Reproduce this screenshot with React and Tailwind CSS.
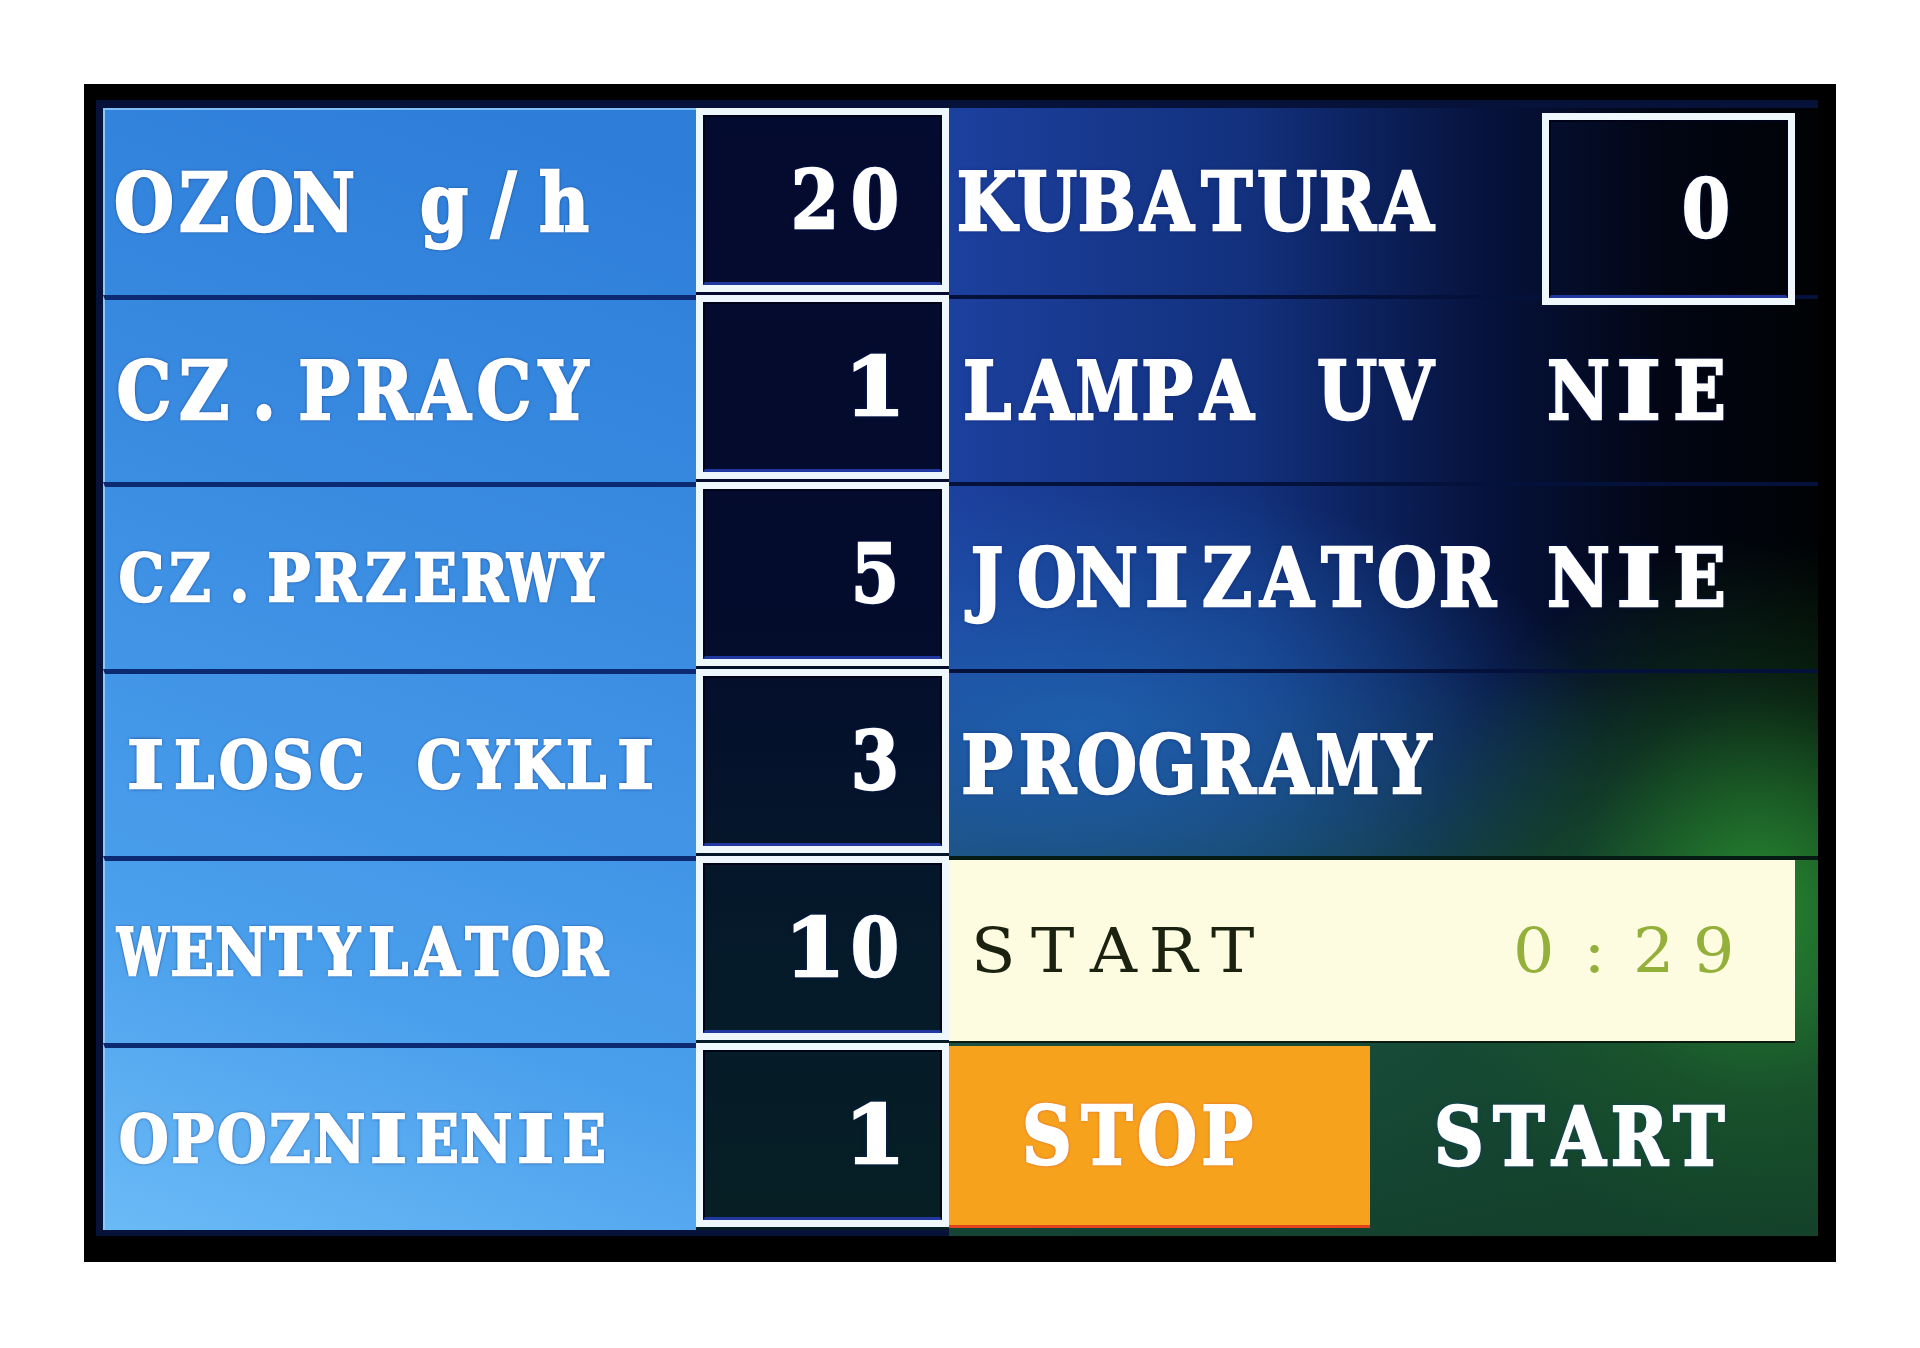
const SERIF = "[font-family:'DejaVu_Serif','Liberation_Serif',serif]";

const haloBlue = "[text-shadow:0_0_2px_#07174f,0_0_4px_#0a2470]";
const haloDark = "[text-shadow:0_0_2px_#2a56c8,0_0_5px_#0b1f6a]";

// horizontal squeeze per glyph so the proportional face reads as a fixed-pitch LCD font
const GLYPH_SCALE = {
  I: "scale-x-[1.2]",
  "1": "scale-x-[1.1]",
  M: "scale-x-[0.72]",
  W: "scale-x-[0.7]",
};

function Lcd({ text, big = true, className = "" }) {
  const cell = big ? "w-[60px]" : "w-[49px]";
  const size = big ? "text-[80px]" : "text-[66px]";
  return (
    <span className={`inline-flex ${SERIF} font-bold leading-none text-white [-webkit-text-stroke:2.5px_#ffffff] ${size} ${className}`}>
      {Array.from(text).map((ch, i) => (
        <span key={i} className={`${cell} shrink-0 flex justify-center`}>
          <span className={`inline-block ${GLYPH_SCALE[ch] || "scale-x-[0.86]"}`}>{ch === " " ? "\u00a0" : ch}</span>
        </span>
      ))}
    </span>
  );
}

// thin status-line lettering
function Thin({ text, className = "" }) {
  return (
    <span className={`inline-flex ${SERIF} font-normal leading-none text-[62px] ${className}`}>
      {Array.from(text).map((ch, i) => (
        <span key={i} className="w-[60px] shrink-0 flex justify-center">
          <span className="inline-block scale-x-[1.05]">{ch}</span>
        </span>
      ))}
    </span>
  );
}

const PARAMS = [
  { label: "OZON g/h", big: true, pad: "pl-[9px]", value: "20" },
  { label: "CZ.PRACY", big: true, pad: "pl-[9px]", value: "1" },
  { label: "CZ.PRZERWY", big: false, pad: "pl-[12px]", value: "5" },
  { label: "ILOSC CYKLI", big: false, pad: "pl-[16px]", value: "3" },
  { label: "WENTYLATOR", big: false, pad: "pl-[14px]", value: "10" },
  { label: "OPOZNIENIE", big: false, pad: "pl-[14px]", value: "1" },
];

function ValueBox({ value, className = "", pad = "pr-[35px]" }) {
  return (
    <div className={`border-[7px] border-[#eef7fb] ${className}`}>
      <div className={`h-full border-2 border-[#010418] border-b-[3px] border-b-[#2138a0] flex items-center justify-end ${pad}`}>
        <Lcd text={value} className={haloDark} />
      </div>
    </div>
  );
}

export default function App() {
  return (
    <div className="w-[1920px] h-[1348px] bg-white pt-[84px] pl-[84px]">
      <div className="w-[1752px] h-[1178px] bg-black pt-4 pl-3">
        <div className="w-[1722px] h-[1136px] bg-[#061239] pt-2 pl-[7px] flex">
          {/* parameter names */}
          <div className="w-[593px] h-[1122px] flex flex-col bg-[linear-gradient(200deg,#2c7cd8_0%,#3a8ce1_40%,#4a9fec_75%,#6abaf6_100%)]">
            {PARAMS.map((p, i) => (
              <div
                key={p.label}
                className={`h-[187px] flex items-center border-l-2 border-l-[#8cc8f8] ${p.pad} ${i > 0 ? "border-t-[5px] border-t-[#0b2a72]" : "border-t-2 border-t-[#7fc0f6]"}`}
              >
                <Lcd text={p.label} big={p.big} className={haloBlue} />
              </div>
            ))}
          </div>

          {/* parameter values */}
          <div className="w-[253px] h-[1122px] flex flex-col bg-[linear-gradient(to_bottom,#040b30_0%,#040c2c_45%,#051a2a_75%,#061f24_100%)]">
            {PARAMS.map((p) => (
              <div key={p.label} className="h-[187px] pb-[3px]">
                <ValueBox value={p.value} className="h-full" />
              </div>
            ))}
          </div>

          {/* right panel */}
          <div className="w-[869px] h-[1128px] flex flex-col [background-image:radial-gradient(ellipse_38%_32%_at_93%_70%,#2c9a34cc_0%,#1f6a2a55_55%,transparent_100%),radial-gradient(ellipse_60%_22%_at_15%_55%,#1f62b0e6_0%,transparent_100%),linear-gradient(to_bottom,transparent_0%,transparent_50%,#1b5a34cc_78%,#14442cee_100%),linear-gradient(to_right,#1c409e_0%,#12307c_35%,#06123c_62%,#020614_82%,#000204_100%)]">
            <div className="h-[187px] flex justify-between pl-[8px]">
              <Lcd text="KUBATURA" className={`${haloDark} self-center`} />
              <ValueBox value="0" className="relative z-10 mt-[5px] mr-[23px] w-[253px] h-[192px]" pad="pr-[50px]" />
            </div>
            <div className="h-[187px] flex items-center pl-[8px] border-t-4 border-t-[#04113a]">
              <div className="w-[592px]">
                <Lcd text="LAMPA UV" className={haloDark} />
              </div>
              <Lcd text="NIE" className={haloDark} />
            </div>
            <div className="h-[187px] flex items-center pl-[8px] border-t-4 border-t-[#04113a]">
              <div className="w-[592px]">
                <Lcd text="JONIZATOR" className={haloDark} />
              </div>
              <Lcd text="NIE" className={haloDark} />
            </div>
            <div className="h-[187px] flex items-center pl-[8px] border-t-4 border-t-[#04113a]">
              <Lcd text="PROGRAMY" className={haloDark} />
            </div>

            {/* status line */}
            <div className="h-[187px] pr-[23px] border-t-4 border-t-[#061a14]">
              <div className="h-full bg-[#fdfbe0] border-b-2 border-b-[#0d1a10] flex items-center justify-between pl-[14px] pr-[51px]">
                <Thin text="START" className="text-[#1c2210]" />
                <Thin text="0:29" className="text-[#93b03a]" />
              </div>
            </div>

            {/* buttons */}
            <div className="h-[185px] flex pt-[3px]">
              <div className="w-[421px] h-full bg-[#f7a21d] border-b-[3px] border-b-[#e2431c] flex items-center justify-center pr-[45px]">
                <Lcd text="STOP" className="[text-shadow:0_0_2px_#d2484a,0_0_4px_#c83c3c]" />
              </div>
              <div className="flex-1 h-full flex items-center justify-center pr-[30px]">
                <Lcd text="START" className="[text-shadow:0_0_2px_#3070d8,0_0_5px_#123c8a]" />
              </div>
            </div>
          </div>
        </div>
      </div>
    </div>
  );
}
